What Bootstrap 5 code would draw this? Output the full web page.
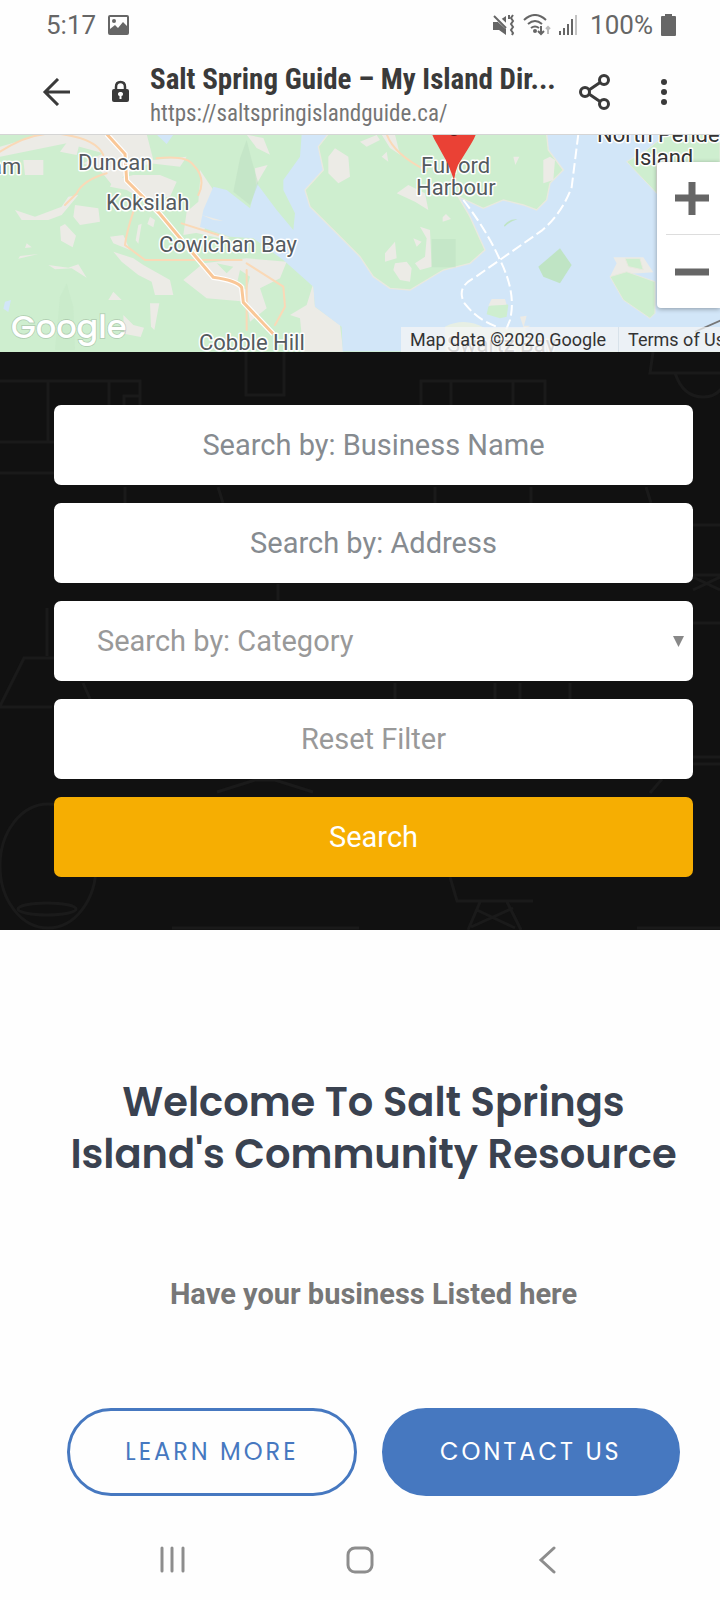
<!DOCTYPE html>
<html lang="en">
<head>
<meta charset="utf-8">
<meta name="viewport" content="width=device-width, initial-scale=1">
<title>Salt Spring Guide – My Island Directory</title>
<link href="https://cdn.jsdelivr.net/npm/bootstrap@5.3.0/dist/css/bootstrap.min.css" rel="stylesheet">
<style>
body{font-family:Roboto,"Liberation Sans",sans-serif;background:#fefefe;color:#3a3a3a}
svg{display:block;flex:none}
.status{height:50px;padding:0 44px 0 46px;color:#666;font-size:26px;line-height:50px}
.status .shot,.status .charge{margin-left:12px}
.appbar{height:85px;padding:0 49px 0 42px;border-bottom:1px solid #d5d5d5}
.appbar button,.sysnav button,.zoomer button{background:none;border:0;padding:0;color:inherit}
.site{padding-top:8px}
.site-name{font-family:"Roboto Condensed","Liberation Sans Narrow",Roboto,sans-serif;font-weight:700;font-size:29px;line-height:36px}
.site-url{font-family:"Roboto Condensed","Liberation Sans Narrow",Roboto,sans-serif;font-size:23px;line-height:34px;color:#757575}
.map{height:217px}
.map>svg{width:100%;height:100%}
.zoomer{top:27px;right:0;width:63px;background:#fff;border-radius:4px 0 0 4px;box-shadow:0 1px 5px #0005;color:#666}
.zoomer button{height:73px;padding-left:18px;display:block;width:100%}
.zoomer button+button::before{content:"";position:absolute;left:9px;right:0;top:72px;border-top:1px solid #ddd}
.credits{right:0;bottom:0;width:319px;height:25px;font-size:18px;line-height:25px;color:#333}
.credits a,.credits span{background:#f5f5f5b8;color:#333;text-decoration:none;padding:0 12px 0 9px}
.credits a{border-left:1px solid #d8e2ea}
.finder{background:#111;padding:53px 27px 53px 54px}
.doodles{inset:0;width:100%;height:100%}
.finder form{gap:18px}
.finder .form-control,.finder .form-select,.finder .btn{height:80px;border:0;border-radius:7px;font-size:29px;line-height:40px;background-color:#fff;color:#999}
.finder .form-control::placeholder{color:#868b90;opacity:1}
.finder .form-select{padding:0 43px;background-image:none}
.finder .btn.go{background:#f6ae02;color:#fff}
.caret{right:9px;top:35px;pointer-events:none}
.intro{padding:146px 27px 50px 54px}
.intro h1{font-family:Poppins,Inter,sans-serif;font-weight:600;font-size:40px;line-height:52px;color:#3a4250;margin:0 0 94px}
.intro p{font-weight:700;font-size:29px;line-height:40px;color:#777;margin:0 0 94px}
.actions{gap:25px;padding:0 13px}
.actions .btn{font-family:Poppins,Lato,sans-serif;font-weight:400;font-size:24px;line-height:36px;letter-spacing:3px;height:88px;border:3px solid #4678c0;border-radius:44px;color:#4678c0;padding:23px 0;flex:1 1 auto}
.actions .btn.solid{background:#4678c0;color:#fff}
.intro,.actions{text-align:center}
.sysnav{gap:160px;height:54px;color:#8d8d8d}
</style>
</head>
<body>
<div class="status d-flex align-items-center">
  <span>5:17</span>
  <svg class="shot" width="21" height="20" viewBox="0 0 21 20" aria-hidden="true"><rect x="1" y="1" width="19" height="18" rx="1" fill="none" stroke="#666" stroke-width="2"/><circle cx="6" cy="6" r="2" fill="#666"/><path d="M2 14l5-4 3 3 5-6 5 5v7H2z" fill="#666"/></svg>
  <svg class="ms-auto me-2" width="22" height="22" viewBox="0 0 22 22" fill="none" stroke="#666" aria-hidden="true"><path d="M0 8h4l9-6v19l-7-5H0z" fill="#666" stroke="none"/><path d="M1 1l13 12" stroke="#fefefe" stroke-width="5"/><path d="M1 2l12 12" stroke-width="2"/><path d="M16 1v4M20 1l-2 3 2 3-2 3 2 3-2 3 2 3-1 2" stroke-width="2"/></svg>
  <svg class="me-2" width="28" height="22" viewBox="0 0 28 22" fill="none" stroke="#666" stroke-width="2" aria-hidden="true"><path d="M1 6Q12-4 23 6M5 10q7-6 14 0M8 14q4-3 8 0"/><circle cx="12" cy="17" r="2" fill="#666" stroke="none"/><path d="M18 12v8m-3-3l3 3 3-3"/><path d="M25 20v-7m-2 2l2-2 2 2" stroke="#bbb"/></svg>
  <svg width="19" height="20" viewBox="0 0 19 20" fill="#666" aria-hidden="true"><path d="M0 16h2v4H0zM4 13h2v7H4zM8 9h2v11H8zM12 4h2v16h-2z"/><path d="M16 0h2v20h-2z" fill="#c4c4c4"/></svg>
  <span class="charge">100%</span>
  <svg class="ms-2" width="15" height="22" viewBox="0 0 15 22" fill="#666" aria-hidden="true"><path d="M4 0h7v2h3q1 0 1 1v18q0 1-1 1H1q-1 0-1-1V3q0-1 1-1h3z"/></svg>
</div>

<header class="appbar d-flex align-items-center">
  <button type="button" aria-label="Back"><svg width="29" height="28" viewBox="0 0 29 28" fill="none" stroke="#3a3a3a" stroke-width="3"><path d="M28 14H3M16 1L3 14l13 13"/></svg></button>
  <svg width="79" height="24" viewBox="0 0 79 24" aria-label="Secure"><path d="M45 10V7q0-5 4.500-5T54 7v3" fill="none" stroke="#3a3a3a" stroke-width="2.500"/><rect x="41" y="9" width="17" height="13" rx="2" fill="#3a3a3a"/><path d="M49.500 12a2 2 0 0 1 1 4v3h-2v-3a2 2 0 0 1 1-4z" fill="#fefefe"/></svg>
  <div class="site flex-grow-1 overflow-hidden">
    <div class="site-name text-nowrap">Salt Spring Guide – My Island Dir...</div>
    <div class="site-url text-nowrap">https://saltspringislandguide.ca/</div>
  </div>
  <button type="button" aria-label="Share"><svg width="32" height="36" viewBox="0 0 32 36" fill="none" stroke="#3a3a3a" stroke-width="3"><circle cx="6" cy="18" r="4.500"/><circle cx="25" cy="6" r="4.500"/><circle cx="25" cy="30" r="4.500"/><path d="M10 16L21 8.500M10 20l11 7.500"/></svg></button>
  <button type="button" class="ms-5" aria-label="More"><svg width="12" height="28" viewBox="6 0 12 28" fill="#3a3a3a"><circle cx="11" cy="4" r="3"/><circle cx="11" cy="14" r="3"/><circle cx="11" cy="24" r="3"/></svg></button>
</header>

<section class="map position-relative overflow-hidden" aria-label="Map">
  <svg viewBox="0 135 720 217" preserveAspectRatio="xMidYMid slice">
    <rect y="130" width="720" height="230" fill="#ceeecf"/>
    <g transform="translate(0 130) scale(.33333)">
      <g fill="#ecebe6">
        <path d="M130 12H440L460 90 560 80 540 110 450 100 380 130 340 170 300 120 250 100 310 70 200 40 100 60 0 80V50z"/>
        <path d="M70 90h60v45H75zM210 25l30 10-10 40-50-10zM740 14l50 10 20 50-40-20zM765 115l38-10-35 60zM340 150l60-15 80 0 50 20-20 45-80 10-50-30-50-10zM45 240l60 20 80-30 20-30 30-5-50 60-40 15-80 0zM225 225l70 10 5 40-60 10-20-25zM180 290l15-8 33 35-10 35-35-20zM330 320l40-5 20 45-50-20zM340 365l60 20 30 20 80 45 10 45h-55l-10-40-40-20-50-40zM550 450l60-50 130-15 120 10-20 50-60 30 20 60-50 40-10-60-120-10z"/>
        <path d="M600 120l40 60-10 50 35 40-35-5-20 40-60 10 10-70 35-30 5-60zM415 285l10-4-10 60-8-10zM450 260l15 10-5 22-18-10zM340 485l25 25-40 0zM450 520h28l-15 80-10-10zM370 555l30 30 32 8-10 28-50-10zM80 340l15 12-20 2zM60 378l55-6-60 14zM145 405l60 8 30-10 25 40-45-28-50 3zM940 460l5 70 75 55 10 80h-120l-10-100-30-10 50-30z"/>
      </g>
      <path d="M720 420l30 20-10 40-30-15zM650 400l50 10-20 20zM865 490l5-60 60 35-50 30z" fill="#ceeecf"/>
      <path d="M905 12H2160V664H1028L1025 590 945 530 940 470 850 390 760 325 690 320 600 290 610 240 640 170 680 180 750 235 770 160 830 240 880 300 885 250 850 180 850 150 900 80z" fill="#d2e6f8"/>
      <path d="M470 14h50l-20 28zM15 515l18-5-8 36-15-10zM610 255l60 15-40 15z" fill="#d2e6f8"/>
      <path d="M605 255l65 18-30-3zM560 285l130 37-20 5-110-25z" fill="#ecebe6"/>
      <path d="M740 30l15 60 20 70-25 65-50-40 20-100z" fill="#bfe1c3" opacity=".6"/>
      <path d="M180 500l20-40 20 70 5 130H165z" fill="#bfe4c4" opacity=".3"/>
      <path d="M985 12H1640L1645 60 1690 120 1650 160 1640 210 1610 240 1570 225 1510 210 1450 235 1375 200 1410 260 1455 360 1410 400 1330 420 1230 480 1170 475 1120 440 1080 380 1010 310 930 230 915 180 970 120 955 50z" fill="#ceeecf" stroke="#e9e9df" stroke-width="4"/>
      <g fill="#ecebe6"><path d="M1080 35l50-20 10 15-40 20zM1145 14l40 0 15 60-30-20zM985 80l20-25 40 25 5 60-35 20-30-30zM1190 190l35-25 50 25 10 50-40-25zM1328 262l10-10 15 15-25 8zM1260 290l30 10 5 110-35 10-15-20 30-20 5-55zM1185 400l35-5 15 20-5 40-30-5-20-30zM1155 370l30-35 5 50-35 10zM1240 325l25 10-15 15zM1630 90l20-10 15 10-5 60-30 10zM1540 80h18l-12 25zM1145 80l15-15 5 30z"/></g>
      <path d="M1295 327h72v85h-72z" fill="#b8dcbd" opacity=".4"/>
      <path d="M1615 410l65-55 35 50-35 55-50-20z" fill="#bfe4c4"/>
      <path d="M1465 530l30-20 30 15-5 35-20 5-40-12z" fill="#ceeecf"/>
      <path d="M1465 527l10-20 40 0 5 17zM1560 560l20-3-8 30 20 0-20 10zM1830 440l20-40-10-18h90l30 45-80 5z" fill="#ecebe6"/>
      <path d="M1830 440L1880 425 1965 455 1965 550 1950 565 1870 510zM1875 385h45l10 35-45-10zM1880 95L1940 60 2000 12H2160V100H1970V190z" fill="#ceeecf" stroke="#e9e9df" stroke-width="3"/>
      <path d="M1335 590q60-30 120 5l120 0 20 70h-260z" fill="#e7efe4"/>
      <path d="M1512 286q15-20 40-18-25 8-38 22z" fill="#bfe4c4"/>
      <g fill="none" stroke="#fad9b7" stroke-width="6" stroke-linecap="round">
        <path d="M0 65q110-70 200-50 90 15 110 60M320 130q-70 20-90 60l-35 35M470 85q90-10 110 20 40 40 15 90M400 245q-20 60-25 100l60 45h290M545 280l110 35M740 400l110 70 5 60-30 55M740 420v180M1160 12q20 60 120 110"/>
      </g>
      <path d="M320 12l55 60 5 80 100 100 75 90 85 100q70 10 85 30l5 45 90 95" fill="none" stroke="#fff" stroke-width="16"/>
      <path d="M320 12l55 60 5 80 100 100 75 90 85 100q70 10 85 30l5 45 90 95" fill="none" stroke="#f9c797" stroke-width="9"/>
      <g fill="none" stroke="#fff" stroke-width="6" stroke-dasharray="32 12"><path d="M1735 12l-20 160q-30 80-90 130l-200 140q-60 30-30 80 40 50 100 70M1390 210q70 90 110 180 50 100 30 180l-20 50"/></g>
      <path d="M2085 605l80-35" stroke="#777" stroke-width="5"/>
    </g>
    <g font-family="Roboto, sans-serif" font-size="22" fill="#555b60" stroke="#fff" stroke-width="3" paint-order="stroke" stroke-linejoin="round">
      <text x="-10" y="174">am</text><text x="78" y="170">Duncan</text><text x="106" y="210">Koksilah</text><text x="159" y="252">Cowichan Bay</text><text x="199" y="350">Cobble Hill</text>
      <text x="421" y="173">Fulford</text><text x="416" y="195">Harbour</text>
      <text x="597" y="142" fill="#333">North Pender</text><text x="634" y="165" fill="#333">Island</text>
      <text x="447" y="352" fill="#888">Swartz Bay</text>
    </g>
    <path d="M431 130h46q-1 6-6 14l-13 21q-3 7-4 15-3-8-6-16l-11-20q-5-8-6-14z" fill="#ea4135"/><circle cx="454" cy="130" r="6" fill="#5c1410"/>
    <text x="11" y="338" font-family="Poppins, Lato, sans-serif" font-size="32" font-weight="500" fill="#fff" stroke="#0002" stroke-width="2" paint-order="stroke">Google</text>
  </svg>
  <div class="zoomer position-absolute">
    <button type="button" aria-label="Zoom in"><svg width="34" height="34" viewBox="0 0 34 34"><path d="M0 16h34M17 0v33" stroke="#666" stroke-width="7"/></svg></button>
    <button type="button" aria-label="Zoom out"><svg width="34" height="34" viewBox="0 0 34 34"><path d="M0 17h34" stroke="#666" stroke-width="7"/></svg></button>
  </div>
  <div class="credits position-absolute d-flex overflow-hidden text-nowrap"><span>Map data ©2020 Google</span><a href="#">Terms of Use</a></div>
</section>

<section class="finder position-relative overflow-hidden">
  <svg class="doodles position-absolute" viewBox="0 352 720 578" preserveAspectRatio="xMinYMin slice" fill="none" stroke="#1a1a1a" stroke-width="3" aria-hidden="true">
    <path d="M0 381h140v30M48 381v60M109 381v26M124 405v-9h16M0 442h54M0 473h54M246 350v45h38v-45M125 487v16M218 487l5 16M278 584v16M47 608v48M0 706l24-48h30M0 707h52M83 683l8 18"/>
    <path d="M421 406v-25h124v25M451 381v25M513 381v25M653 352l-3 21h70M675 373q8 24 28 24t25-24M435 487v16M531 487v16M646 487l5 16M693 525h27M693 575h27M693 590l27-13M693 577l27 13M693 623h27M395 683v16M495 683v16M520 683v16M570 683v16M693 757h27M693 764h27M662 779l-12 14M217 792l38-12h20l38 12"/>
    <ellipse cx="48" cy="866" rx="48" ry="62"/><ellipse cx="47" cy="909" rx="29" ry="6"/>
    <path d="M450 877l7 24h76M480 902l-12 28M507 902l14 28M477 910l38 18M513 908l-42 19M172 928h187M637 928h83"/>
  </svg>
  <form class="position-relative d-flex flex-column" onsubmit="return false">
    <input class="form-control text-center" type="text" placeholder="Search by: Business Name" aria-label="Business name">
    <input class="form-control text-center" type="text" placeholder="Search by: Address" aria-label="Address">
    <div class="position-relative">
      <select class="form-select" aria-label="Category"><option>Search by: Category</option></select>
      <svg class="caret position-absolute" width="11" height="11" viewBox="0 0 11 11"><path d="M0 0h11L5.500 11z" fill="#888"/></svg>
    </div>
    <button type="reset" class="btn">Reset Filter</button>
    <button type="submit" class="btn go">Search</button>
  </form>
</section>

<main class="intro">
  <h1>Welcome To Salt Springs Island's Community Resource</h1>
  <p>Have your business Listed here</p>
  <div class="actions d-flex">
    <a class="btn" href="#">LEARN MORE</a>
    <a class="btn solid" href="#">CONTACT US</a>
  </div>
</main>

<nav class="sysnav d-flex justify-content-center align-items-start" aria-label="System">
  <button type="button" aria-label="Recent apps"><svg width="28" height="28" viewBox="0 0 28 28" stroke="#8d8d8d" stroke-width="3" stroke-linecap="round"><path d="M4 2v23M14 2v23M25 2v23"/></svg></button>
  <button type="button" aria-label="Home"><svg width="28" height="28" viewBox="0 0 28 28"><rect x="2" y="2" width="24" height="24" rx="7" fill="none" stroke="#8d8d8d" stroke-width="3"/></svg></button>
  <button type="button" aria-label="Back"><svg width="28" height="28" viewBox="0 0 28 28" fill="none" stroke="#8d8d8d" stroke-width="3" stroke-linecap="round"><path d="M20 2L7 14l13 12"/></svg></button>
</nav>
<script src="https://cdn.jsdelivr.net/npm/bootstrap@5.3.0/dist/js/bootstrap.bundle.min.js"></script>
</body>
</html>
